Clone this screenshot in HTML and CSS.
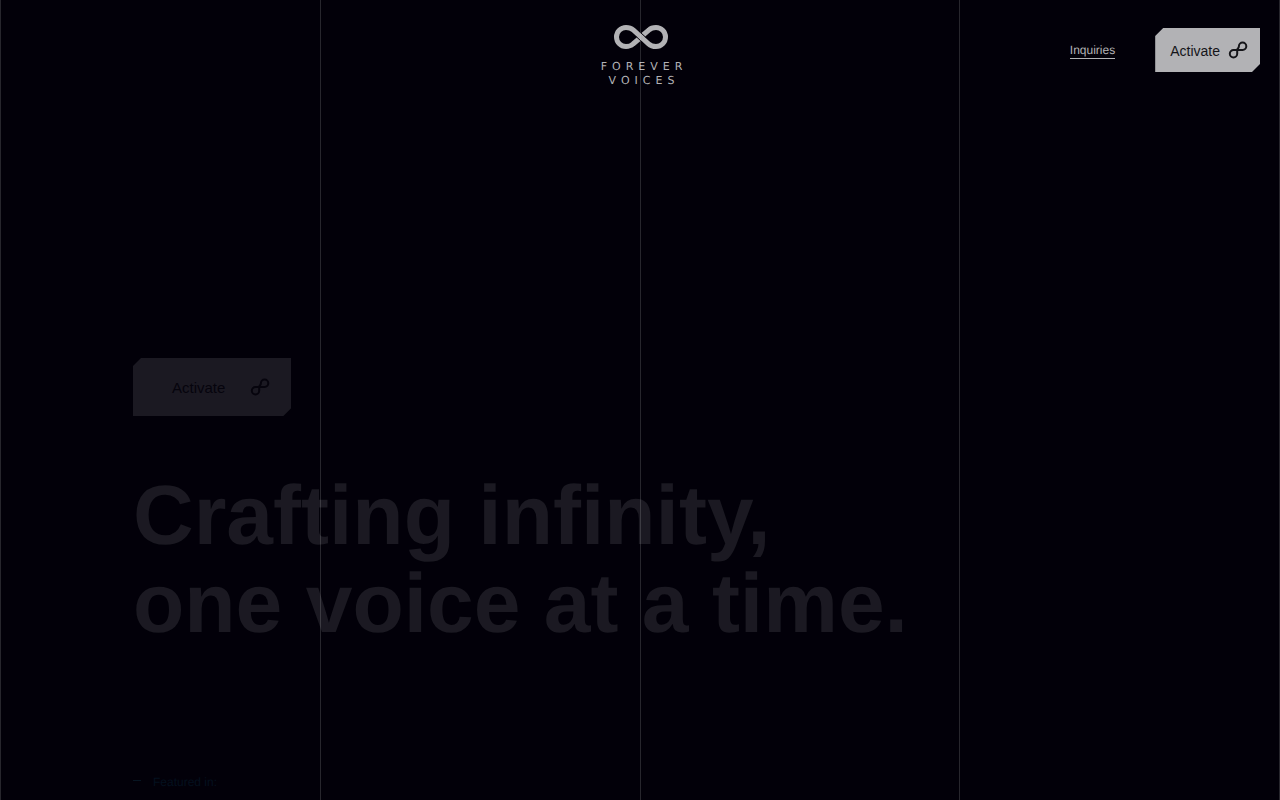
FILE: index.html
```html
<!DOCTYPE html>
<html lang="en">
<head>
<meta charset="utf-8">
<meta name="viewport" content="width=device-width, initial-scale=1">
<title>Forever Voices</title>
<link rel="stylesheet" href="styles.css">
</head>
<body>
<div class="page">
  <header class="header">
    <a class="logo" href="#">
      <svg class="logo-mark" viewBox="0 0 54 24" width="54" height="24" aria-hidden="true">
        <path class="logo-loop" d="M25.500 13.500L19 19C17 20.800 15 21.500 12 21.500A9.500 9.500 0 0 1 12 2.500C15 2.500 17.500 3.500 19.500 5.200L34.500 18.800C36.500 20.600 39 21.500 42 21.500A9.500 9.500 0 0 0 42 2.500C39 2.500 36.500 3.400 35 5L28.500 10.500"/>
        <path class="logo-cut" d="M25.500 6.600L31.500 12.100M22.500 11.900L28.500 17.400"/>
      </svg>
      <span class="logo-name">FOREVER</span>
      <span class="logo-name">VOICES</span>
    </a>
    <nav class="nav">
      <a class="inquiries" href="#">Inquiries</a>
      <button class="activate" type="button">
        <span>Activate</span>
        <svg class="loop-icon" viewBox="0 0 20 18" width="20" height="18" aria-hidden="true"><path d="M10.500 9H5.500A3.700 3.700 0 1 0 9.200 12.700V9C9.200 7.500 10.900 7.500 10.900 5.300A3.700 3.700 0 1 1 14.600 9H10"/></svg>
      </button>
    </nav>
  </header>
  <main class="hero">
    <button class="activate activate-large" type="button">
      <span>Activate</span>
      <svg class="loop-icon" viewBox="0 0 20 18" width="20" height="18" aria-hidden="true"><path d="M10.500 9H5.500A3.700 3.700 0 1 0 9.200 12.700V9C9.200 7.500 10.900 7.500 10.900 5.300A3.700 3.700 0 1 1 14.600 9H10"/></svg>
    </button>
    <h1 class="title">Crafting infinity,<br>one voice at a time.</h1>
    <p class="featured"><span class="dash"></span>Featured in:</p>
  </main>
  <div class="grid-lines" aria-hidden="true"><i></i><i></i><i></i><i></i><i></i></div>
</div>
</body>
</html>
```

FILE: styles.css
```css
* {
  box-sizing: border-box;
}

body {
  margin: 0;
  background: #020009;
  color: #b2b2b5;
  font-family: "Liberation Sans", Arial, sans-serif;
  text-rendering: geometricPrecision;
}

.page {
  position: relative;
  display: flex;
  flex-direction: column;
  min-height: 100vh;
  overflow: hidden;
}

.header {
  display: grid;
  grid-template-columns: 1fr auto 1fr;
  align-items: start;
  height: 98px;
  padding: 24px 20px 0;
}

.logo {
  grid-column: 2;
  display: flex;
  flex-direction: column;
  align-items: center;
  padding-left: 3px;
  color: inherit;
  text-decoration: none;
}

.logo-mark {
  margin: 1px 0 11px;
}

.logo-loop {
  fill: none;
  stroke: #b2b2b5;
  stroke-width: 5;
}

.logo-cut {
  fill: none;
  stroke: #020009;
  stroke-width: 1;
}

.logo-name {
  padding-left: 5px;
  font-family: "DejaVu Sans", sans-serif;
  font-size: 11px;
  line-height: 14px;
  letter-spacing: 5px;
}

.nav {
  display: flex;
  justify-content: flex-end;
  align-items: center;
  gap: 40px;
  padding-top: 4px;
}

.inquiries {
  border-bottom: 1px solid #b2b2b5;
  color: inherit;
  font-size: 12px;
  line-height: 16px;
  text-decoration: none;
}

.activate {
  display: flex;
  align-items: center;
  gap: 8px;
  height: 44px;
  padding: 2px 12px 0 15px;
  border: 0;
  background: #b2b2b5;
  color: #151519;
  font: 14px/20px "Liberation Sans", Arial, sans-serif;
  clip-path: polygon(8px 0, 100% 0, 100% calc(100% - 8px), calc(100% - 8px) 100%, 0 100%, 0 8px);
}

.loop-icon {
  flex: none;
  margin-bottom: 3px;
  fill: none;
  stroke: currentColor;
  stroke-width: 2;
}

.hero {
  display: flex;
  flex: 1;
  flex-direction: column;
  align-items: flex-start;
  justify-content: flex-end;
  padding: 0 20px 10px 133px;
}

.activate-large {
  gap: 25px;
  height: 58px;
  padding: 2px 21px 0 39px;
  background: #1b1922;
  color: #06040d;
  font-size: 15px;
}

.title {
  margin: 55px 0 127px;
  color: #1b1922;
  font-size: 84px;
  line-height: 88px;
}

.featured {
  display: flex;
  gap: 12px;
  margin: 0;
  color: #04101f;
  font-size: 12px;
  line-height: 16px;
}

.dash {
  width: 8px;
  height: 1px;
  margin-top: 6px;
  background: #071522;
}

.grid-lines {
  position: absolute;
  inset: 0;
  display: flex;
  justify-content: space-between;
  pointer-events: none;
}

.grid-lines i {
  width: 1px;
  background: rgba(255, 255, 255, 0.15);
}
```
